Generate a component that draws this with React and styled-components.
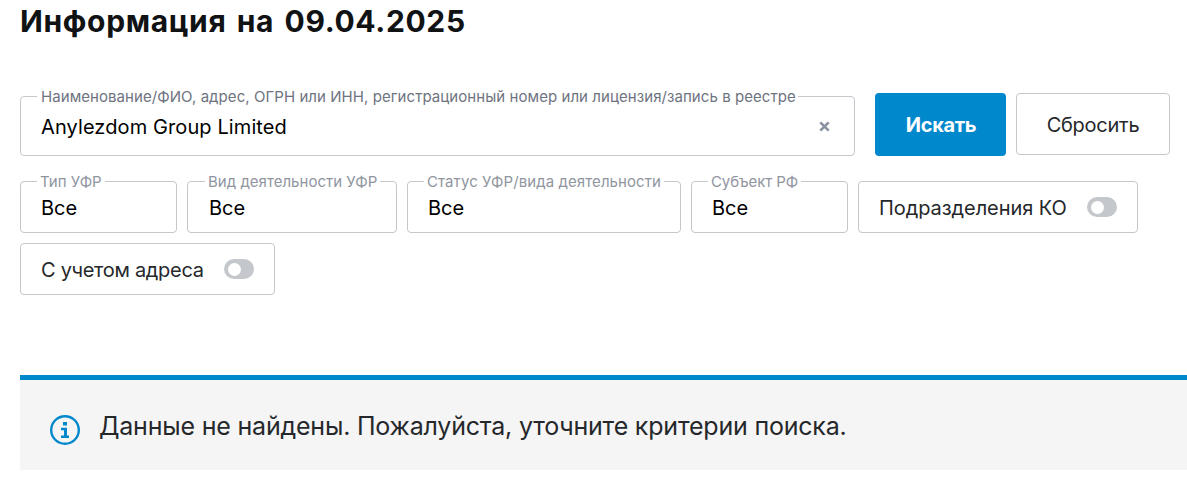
import React, { useState } from 'react';
import styled, { createGlobalStyle } from 'styled-components';

const filters = [
	{ label: 'Тип УФР', value: 'Все', width: 157, spacing: 0 },
	{ label: 'Вид деятельности УФР', value: 'Все', width: 210, spacing: 0.02, shift: 1 },
	{ label: 'Статус УФР/вида деятельности', value: 'Все', width: 274, spacing: 0.08 },
	{ label: 'Субъект РФ', value: 'Все', width: 157, spacing: -0.1 },
];

function Toggle({ label, width, spacing }) {
	const [on, setOn] = useState(false);

	return (
		<ToggleBox $width={width} $spacing={spacing} onClick={() => setOn(!on)}>
			<ToggleLabel>{label}</ToggleLabel>
			<Switch $on={on}>
				<Knob />
			</Switch>
		</ToggleBox>
	);
}

function App() {

	return (
		<Page>
			<GlobalStyle />
			<Header>Информация на 09.04.2025</Header>
			<SearchRow>
				<SearchField>
					<SearchLegend>Наименование/ФИО, адрес, ОГРН или ИНН, регистрационный номер или лицензия/запись в реестре</SearchLegend>
					<SearchValue>
						<span>Anylezdom Group Limited</span>
						<ClearIcon viewBox="0 0 10 10">
							<path d="M1.2 1.2L8.8 8.8M8.8 1.2L1.2 8.8" />
						</ClearIcon>
					</SearchValue>
				</SearchField>
				<SearchButton>Искать</SearchButton>
				<ResetButton>Сбросить</ResetButton>
			</SearchRow>
			<Filters>
				{filters.map((f) => (
					<Field key={f.label} $width={f.width} $shift={f.shift}>
						<Legend $spacing={f.spacing}>{f.label}</Legend>
						<Value>{f.value}</Value>
					</Field>
				))}
				<Toggle label="Подразделения КО" width={280} spacing={-0.07} />
				<Toggle label="С учетом адреса" width={255} spacing={-0.3} />
			</Filters>
			<Notice>
				<InfoIcon viewBox="0 0 30 30">
					<circle cx="15" cy="15" r="13.8" />
					<path d="M13 7H17V10.6H13ZM11 12.7H17V20.4H19V23H11V20.4H14V15.2H11Z" />
				</InfoIcon>
				<NoticeText>Данные не найдены. Пожалуйста, уточните критерии поиска.</NoticeText>
			</Notice>
		</Page>
	);

}

const GlobalStyle = createGlobalStyle`
  * {
    box-sizing: border-box;
  }
  body {
    margin: 0;
    background: #fff;
    font-family: 'Inter', 'Liberation Sans', sans-serif;
  }
`;

const Page = styled.div`
  height: 483px;
  padding-left: 20px;
  overflow: hidden;
  white-space: nowrap;
`;

const Header = styled.h1`
  margin: 0;
  padding-top: 1px;
  height: 87px;
  line-height: 40px;
  font-size: 30px;
  font-weight: 700;
  letter-spacing: 0.65px;
  word-spacing: 2.6px;
  color: #101214;
`;

const SearchRow = styled.div`
  display: flex;
  align-items: flex-start;
`;

const Field = styled.fieldset`
  width: ${(p) => p.$width}px;
  height: 61px;
  min-width: 0;
  margin: 0;
  padding: 0 16px;
  padding-left: ${(p) => 16 + (p.$shift || 0)}px;
  border: 1px solid #c5c7cd;
  border-radius: 4px;
`;

const SearchField = styled(Field)`
  width: 835px;
  height: 69px;
`;

const Legend = styled.legend`
  height: 19px;
  padding: 0 3px;
  line-height: 19px;
  font-size: 15px;
  letter-spacing: ${(p) => p.$spacing || 0}px;
  color: #9095a0;
`;

const SearchLegend = styled(Legend)`
  padding: 0 2px 0 4px;
  letter-spacing: 0.065px;
  color: #6e7380;
`;

const Value = styled.div`
  padding-left: 4px;
  line-height: 34px;
  font-size: 20px;
  color: #000;
`;

const SearchValue = styled(Value)`
  display: flex;
  justify-content: space-between;
  align-items: center;
  padding-right: 8px;
  line-height: 43px;
  letter-spacing: 0.1px;
`;

const ClearIcon = styled.svg`
  width: 11px;
  height: 11px;
  margin-bottom: 3px;
  fill: none;
  stroke: #8a919f;
  stroke-width: 2.4;
`;

const Button = styled.button`
  margin: 6px 0 0;
  padding: 0;
  border-radius: 4px;
  font-family: inherit;
  font-size: 20px;
  cursor: pointer;
`;

const SearchButton = styled(Button)`
  width: 131px;
  height: 63px;
  margin-left: 20px;
  padding-left: 1px;
  border: none;
  background: #0088cd;
  color: #fff;
  font-weight: 700;
  letter-spacing: -0.35px;
`;

const ResetButton = styled(Button)`
  width: 154px;
  height: 62px;
  margin-left: 10px;
  padding-top: 2px;
  border: 1px solid #c5c7cd;
  background: #fff;
  color: #25282b;
  letter-spacing: -0.25px;
`;

const Filters = styled.div`
  display: flex;
  flex-wrap: wrap;
  align-items: flex-end;
  gap: 10px;
  margin-top: 16px;
`;

const ToggleBox = styled.div`
  display: flex;
  align-items: center;
  justify-content: space-between;
  width: ${(p) => p.$width}px;
  height: 52px;
  padding: 0 20px;
  border: 1px solid #c5c7cd;
  border-radius: 4px;
  font-size: 20px;
  letter-spacing: ${(p) => p.$spacing}px;
  color: #25282b;
  cursor: pointer;
`;

const ToggleLabel = styled.span`
  padding-top: 2px;
`;

const Switch = styled.span`
  display: flex;
  align-items: center;
  justify-content: ${(p) => (p.$on ? 'flex-end' : 'flex-start')};
  width: 30px;
  height: 20px;
  padding: 0 3.5px;
  border-radius: 10px;
  background: ${(p) => (p.$on ? '#0088cd' : '#c4c7cc')};
`;

const Knob = styled.span`
  width: 13px;
  height: 13px;
  border-radius: 50%;
  background: #fff;
`;

const Notice = styled.div`
  display: flex;
  align-items: center;
  height: 95px;
  margin-top: 80px;
  padding-left: 30px;
  border-top: 5px solid #0088cd;
  background: #f5f5f5;
`;

const InfoIcon = styled.svg`
  width: 30px;
  height: 30px;
  margin-top: 10px;
  circle {
    fill: none;
    stroke: #0088cd;
    stroke-width: 2.4;
  }
  path {
    fill: #0088cd;
  }
`;

const NoticeText = styled.div`
  margin-left: 19px;
  padding-top: 2px;
  line-height: 30px;
  font-size: 25px;
  letter-spacing: -0.2px;
  color: #25282b;
`;

export default App;
